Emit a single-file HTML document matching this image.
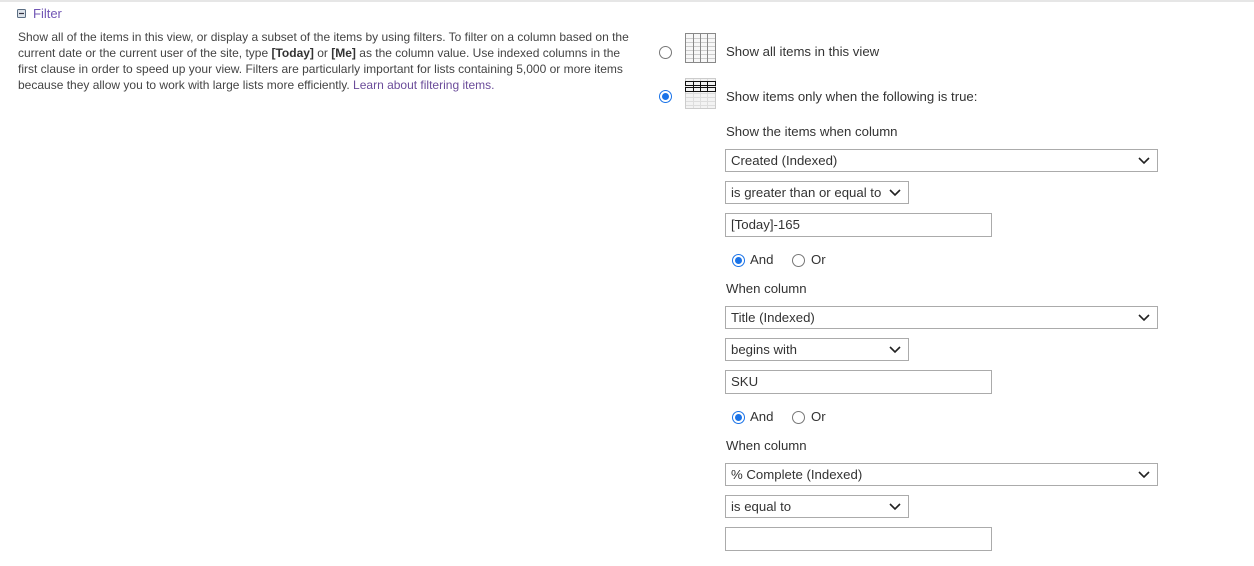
<!DOCTYPE html>
<html><head><meta charset="utf-8"><style>
*{margin:0;padding:0;box-sizing:border-box}
body{width:1254px;height:566px;background:#fff;font-family:"Liberation Sans",sans-serif;color:#333;position:relative;overflow:hidden}
.a{position:absolute;white-space:nowrap}
.top{position:absolute;left:0;top:0;width:1254px;height:2px;background:#e6e6e6}
.desc{font-size:12px;color:#444;line-height:16px}
.desc b{color:#333}
.desc a{color:#6b4c9a;text-decoration:none}
.t{font-size:13.2px;color:#333}
.box{position:absolute;border:1px solid #ababab;background:#fff;font-size:13.2px;color:#333;padding-left:5px;padding-top:1px;line-height:19px}
.chev{position:absolute;right:7px;top:4px}
.r{position:absolute;width:13px;height:13px;border-radius:50%;border:1px solid #777;background:#fff}
.r.on{border-color:#1a73e8}
.r.on::after{content:"";position:absolute;left:2px;top:2px;width:7px;height:7px;border-radius:50%;background:#1a73e8}
</style></head><body>
<div class="top"></div>
<svg class="a" style="left:17px;top:9px" width="10" height="10"><rect x="0.5" y="0.5" width="8" height="8" rx="1" fill="#dde3ea" stroke="#5a6d82"/><line x1="2" y1="4.5" x2="7" y2="4.5" stroke="#334" stroke-width="1.2"/></svg>
<div class="a" style="left:33px;top:6px;font-size:13px;color:#7257b5">Filter</div>
<div class="a desc" style="left:18px;top:29px">Show all of the items in this view, or display a subset of the items by using filters. To filter on a column based on the<br>current date or the current user of the site, type <b>[Today]</b> or <b>[Me]</b> as the column value. Use indexed columns in the<br>first clause in order to speed up your view. Filters are particularly important for lists containing 5,000 or more items<br>because they allow you to work with large lists more efficiently. <a>Learn about filtering items.</a></div>

<div class="r" style="left:659px;top:46px"></div>
<div class="r on" style="left:659px;top:90px"></div>

<svg class="a" style="left:685px;top:33px" width="32" height="31">
<rect x="0.5" y="0.5" width="30" height="29" fill="#f7f7f7" stroke="#888"/>
<g stroke="#ccc"><line x1="1" y1="5.5" x2="30" y2="5.5"/><line x1="1" y1="9.5" x2="30" y2="9.5"/><line x1="1" y1="13.5" x2="30" y2="13.5"/><line x1="1" y1="17.5" x2="30" y2="17.5"/><line x1="1" y1="21.5" x2="30" y2="21.5"/><line x1="1" y1="25.5" x2="30" y2="25.5"/></g>
<g stroke="#888"><line x1="8.5" y1="1" x2="8.5" y2="29"/><line x1="15.5" y1="1" x2="15.5" y2="29"/><line x1="22.5" y1="1" x2="22.5" y2="29"/></g>
</svg>
<svg class="a" style="left:685px;top:78px" width="32" height="32">
<rect x="0.5" y="0.5" width="30" height="30" fill="#f3f3f3" stroke="#ccc"/>
<g stroke="#ddd"><line x1="1" y1="15.5" x2="30" y2="15.5"/><line x1="1" y1="19.5" x2="30" y2="19.5"/><line x1="1" y1="23.5" x2="30" y2="23.5"/><line x1="1" y1="27.5" x2="30" y2="27.5"/><line x1="8.5" y1="1" x2="8.5" y2="30"/><line x1="15.5" y1="1" x2="15.5" y2="30"/><line x1="22.5" y1="1" x2="22.5" y2="30"/></g>
<g stroke="#111" fill="none"><rect x="0.5" y="3.5" width="30" height="4"/><rect x="0.5" y="9.5" width="30" height="4"/><line x1="8.5" y1="3" x2="8.5" y2="14"/><line x1="15.5" y1="3" x2="15.5" y2="14"/><line x1="22.5" y1="3" x2="22.5" y2="14"/></g>
</svg>

<div class="a t" style="left:726px;top:44px">Show all items in this view</div>
<div class="a t" style="left:726px;top:89px">Show items only when the following is true:</div>
<div class="a t" style="left:726px;top:124px">Show the items when column</div>

<div class="box" style="left:725px;top:149px;width:433px;height:23px">Created (Indexed)<svg class="chev" width="12" height="12"><path d="M1 4 L6 9 L11 4" fill="none" stroke="#222" stroke-width="1.6"/></svg></div>
<div class="box" style="left:725px;top:181px;width:184px;height:23px">is greater than or equal to<svg class="chev" width="12" height="12"><path d="M1 4 L6 9 L11 4" fill="none" stroke="#222" stroke-width="1.6"/></svg></div>
<div class="box" style="left:725px;top:213px;width:267px;height:24px">[Today]-165</div>

<div class="r on" style="left:732px;top:254px"></div><div class="a t" style="left:750px;top:252px">And</div>
<div class="r" style="left:792px;top:254px"></div><div class="a t" style="left:811px;top:252px">Or</div>
<div class="a t" style="left:726px;top:281px">When column</div>

<div class="box" style="left:725px;top:306px;width:433px;height:23px">Title (Indexed)<svg class="chev" width="12" height="12"><path d="M1 4 L6 9 L11 4" fill="none" stroke="#222" stroke-width="1.6"/></svg></div>
<div class="box" style="left:725px;top:338px;width:184px;height:23px">begins with<svg class="chev" width="12" height="12"><path d="M1 4 L6 9 L11 4" fill="none" stroke="#222" stroke-width="1.6"/></svg></div>
<div class="box" style="left:725px;top:370px;width:267px;height:24px">SKU</div>

<div class="r on" style="left:732px;top:411px"></div><div class="a t" style="left:750px;top:409px">And</div>
<div class="r" style="left:792px;top:411px"></div><div class="a t" style="left:811px;top:409px">Or</div>
<div class="a t" style="left:726px;top:438px">When column</div>

<div class="box" style="left:725px;top:463px;width:433px;height:23px">% Complete (Indexed)<svg class="chev" width="12" height="12"><path d="M1 4 L6 9 L11 4" fill="none" stroke="#222" stroke-width="1.6"/></svg></div>
<div class="box" style="left:725px;top:495px;width:184px;height:23px">is equal to<svg class="chev" width="12" height="12"><path d="M1 4 L6 9 L11 4" fill="none" stroke="#222" stroke-width="1.6"/></svg></div>
<div class="box" style="left:725px;top:527px;width:267px;height:24px"></div>
</body></html>
